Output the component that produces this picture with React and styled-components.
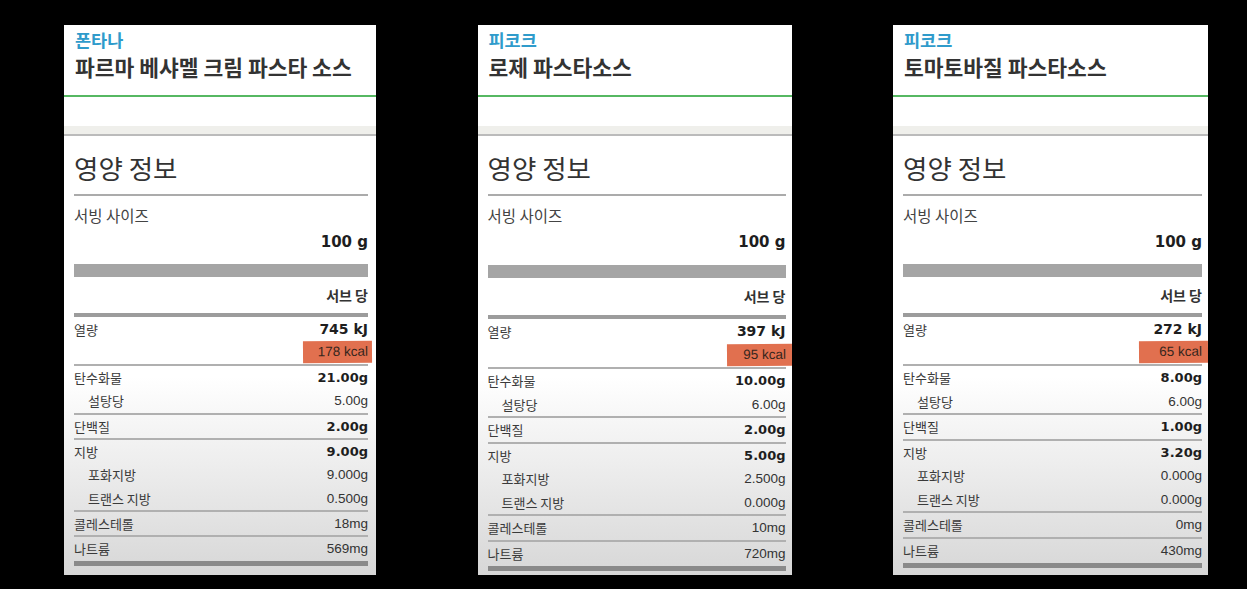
import React from 'react';
import styled, { createGlobalStyle } from 'styled-components';

const GlobalStyle = createGlobalStyle`
  html, body { margin: 0; padding: 0; background: #000; }
  body {
    width: 1247px; height: 589px; overflow: hidden;
    font-family: "Noto Sans CJK KR", "Noto Sans", sans-serif;
  }
`;

const Stage = styled.main`
  display: flex;
  align-items: flex-start;
  gap: 101.5px;
  box-sizing: border-box;
  height: 589px;
  padding: 25px 0 0 64px;
  background: #000;
`;

const Card = styled.section`
  flex: none;
  width: ${p => p.$w}px;
  height: 550px;
  display: flex;
  flex-direction: column;
  overflow: hidden;
  background: linear-gradient(180deg, #fff 0%, #fff 64%, #d7d7d7 100%);
`;

const Header = styled.header`
  padding: 4px 11px 15px;
  border-bottom: 2px solid #56b862;
`;

const Brand = styled.div`
  font-size: 17.5px;
  line-height: 21px;
  font-weight: 700;
  color: #2f9bcb;
`;

const Title = styled.h1`
  margin: 4px 0 0;
  font-size: 21.5px;
  line-height: 26px;
  font-weight: 700;
  color: #333;
  white-space: nowrap;
`;

const Spacer = styled.div`
  height: 29px;
`;

const Band = styled.div`
  height: 8px;
  background: #efefeb;
  border-bottom: 2px solid #bbb;
`;

const Body = styled.div`
  display: flex;
  flex-direction: column;
  padding: 0 ${p => p.$pr}px 0 10px;
`;

const Heading = styled.h2`
  margin: 16px 0 0;
  padding-bottom: 10px;
  border-bottom: 2px solid #ababab;
  font-size: 26.5px;
  line-height: 32px;
  font-weight: 400;
  color: #333;
`;

const ServingLabel = styled.div`
  margin-top: 9px;
  font-size: 15.5px;
  line-height: 20px;
  color: #444;
`;

const ServingValue = styled.div`
  margin-top: 7px;
  text-align: right;
  font-family: "DejaVu Sans", sans-serif;
  font-weight: 700;
  font-size: 15px;
  line-height: 20px;
  color: #1e1e1e;
`;

const ThickBar = styled.div`
  margin-top: ${p => 12 + p.$extra}px;
  height: 13px;
  background: #a5a5a5;
`;

const PerServe = styled.div`
  margin-top: 8px;
  text-align: right;
  font-size: 14px;
  font-weight: 700;
  line-height: 20px;
  color: #333;
`;

const ThinBar = styled.div`
  margin-top: ${p => 8 + p.$extra}px;
  height: 4px;
  background: #9c9c9c;
`;

const EnergyRow = styled.div`
  margin-top: 2px;
  height: 20px;
  display: flex;
  align-items: center;
  justify-content: space-between;
`;

const KcalRow = styled.div`
  margin-top: ${p => 2 + p.$extra}px;
  height: 22px;
  display: flex;
  justify-content: flex-end;
`;

const KcalBox = styled.div`
  box-sizing: border-box;
  width: ${p => p.$w}px;
  height: 22px;
  margin-right: -${p => p.$over}px;
  padding-right: ${p => p.$over}px;
  background: #e1704f;
  text-align: right;
  font-family: "Liberation Sans", Arial, sans-serif;
  font-size: 13.5px;
  line-height: 22px;
  color: #36261d;
  transform: rotate(-0.4deg);
`;

const Group = styled.div`
  margin-top: ${p => (p.$first ? 1 : 0)}px;
  border-top: 2px solid #b0b0b0;
`;

const Row = styled.div`
  height: ${p => p.$h}px;
  display: flex;
  align-items: center;
  justify-content: space-between;
  padding-left: ${p => (p.$sub ? 14 : 0)}px;
`;

const Label = styled.span`
  font-size: 13px;
  color: #3a3a3a;
`;

const Value = styled.span`
  font-family: ${p => (p.$bold ? '"DejaVu Sans", sans-serif' : '"Liberation Sans", Arial, sans-serif')};
  font-weight: ${p => (p.$bold ? 700 : 400)};
  font-size: ${p => (p.$bold ? 13 : 13.5)}px;
  color: ${p => (p.$bold ? '#1e1e1e' : '#333')};
`;

const EnergyValue = styled.span`
  font-family: "DejaVu Sans", sans-serif;
  font-weight: 700;
  font-size: 14px;
  color: #1e1e1e;
`;

const BottomBar = styled.div`
  margin-top: 1px;
  height: 5px;
  background: #8a8a8a;
`;

const products = [
  {
    w: 312, rowH: 23.3, extra: 0, pr: 8, kcalW: 69, over: 4,
    brand: '폰타나', title: '파르마 베샤멜 크림 파스타 소스',
    kj: '745 kJ', kcal: '178 kcal',
    v: ['21.00g', '5.00g', '2.00g', '9.00g', '9.000g', '0.500g', '18mg', '569mg'],
  },
  {
    w: 314, rowH: 23.5, extra: 1, pr: 6, kcalW: 65, over: 6,
    brand: '피코크', title: '로제 파스타소스',
    kj: '397 kJ', kcal: '95 kcal',
    v: ['10.00g', '6.00g', '2.00g', '5.00g', '2.500g', '0.000g', '10mg', '720mg'],
  },
  {
    w: 315, rowH: 23.5, extra: 0, pr: 6, kcalW: 69, over: 6,
    brand: '피코크', title: '토마토바질 파스타소스',
    kj: '272 kJ', kcal: '65 kcal',
    v: ['8.00g', '6.00g', '1.00g', '3.20g', '0.000g', '0.000g', '0mg', '430mg'],
  },
];

const groupsOf = v => [
  [
    { label: '탄수화물', value: v[0], bold: true },
    { label: '설탕당', value: v[1], sub: true },
  ],
  [{ label: '단백질', value: v[2], bold: true }],
  [
    { label: '지방', value: v[3], bold: true },
    { label: '포화지방', value: v[4], sub: true },
    { label: '트랜스 지방', value: v[5], sub: true },
  ],
  [{ label: '콜레스테롤', value: v[6] }],
  [{ label: '나트륨', value: v[7] }],
];

function NutritionCard({ p }) {
  return (
    <Card $w={p.w}>
      <Header>
        <Brand>{p.brand}</Brand>
        <Title>{p.title}</Title>
      </Header>
      <Spacer />
      <Band />
      <Body $pr={p.pr}>
        <Heading>영양 정보</Heading>
        <ServingLabel>서빙 사이즈</ServingLabel>
        <ServingValue>100 g</ServingValue>
        <ThickBar $extra={p.extra} />
        <PerServe>서브 당</PerServe>
        <ThinBar $extra={p.extra} />
        <EnergyRow>
          <Label>열량</Label>
          <EnergyValue>{p.kj}</EnergyValue>
        </EnergyRow>
        <KcalRow $extra={p.extra}>
          <KcalBox $w={p.kcalW} $over={p.over}>{p.kcal}</KcalBox>
        </KcalRow>
        {groupsOf(p.v).map((g, gi) => (
          <Group key={gi} $first={gi === 0}>
            {g.map(r => (
              <Row key={r.label} $h={p.rowH} $sub={r.sub}>
                <Label>{r.label}</Label>
                <Value $bold={r.bold}>{r.value}</Value>
              </Row>
            ))}
          </Group>
        ))}
        <BottomBar />
      </Body>
    </Card>
  );
}

export default function App() {
  return (
    <>
      <GlobalStyle />
      <Stage>
        {products.map((p, i) => (
          <NutritionCard key={i} p={p} />
        ))}
      </Stage>
    </>
  );
}
